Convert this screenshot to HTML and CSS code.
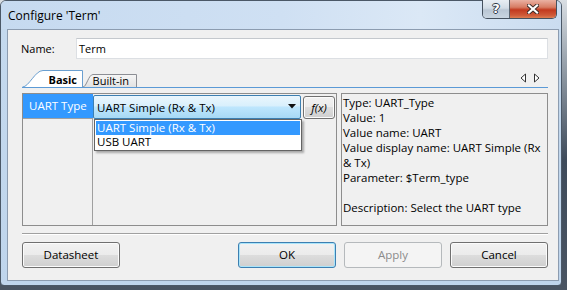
FILE: index.html
```html
<!DOCTYPE html>
<html>
<head>
<meta charset="utf-8">
<link rel="stylesheet" href="styles.css">
</head>
<body>
<div class="window">
  <div class="titlebar">
    <span class="title">Configure 'Term'</span>
    <div class="caption-btns">
      <div class="cap-help">?</div>
      <div class="cap-close">
        <svg width="12" height="10" viewBox="0 0 12 10">
          <path d="M2 1.5 L10 8.5 M10 1.5 L2 8.5" stroke="#3b2a28" stroke-width="4" stroke-linecap="square" fill="none"/>
          <path d="M2 1.5 L10 8.5 M10 1.5 L2 8.5" stroke="#ffffff" stroke-width="2.2" stroke-linecap="square" fill="none"/>
        </svg>
      </div>
    </div>
  </div>
  <div class="client">
    <div class="name-row">
      <span class="name-label">Name:</span>
      <div class="name-input">Term</div>
    </div>
    <div class="tabbar">
      <div class="tab tab-active">
        <svg class="tab-shape" width="61" height="17" viewBox="0 0 61 17">
          <path d="M0.5 17 C7 17 13 0.5 21 0.5 L60.5 0.5 L60.5 17" fill="#ffffff" stroke="#6a9fd0" stroke-width="1"/>
        </svg>
        <span class="tab-label tab-label-active">Basic</span>
      </div>
      <div class="tab tab-inactive">
        <svg class="tab-shape" width="54" height="13" viewBox="0 0 54 13">
          <defs>
            <linearGradient id="tg" x1="0" y1="0" x2="0" y2="1">
              <stop offset="0" stop-color="#f6f6f6"/>
              <stop offset="1" stop-color="#e3e3e3"/>
            </linearGradient>
          </defs>
          <path d="M0 13 C3.5 13 5.5 0.5 10 0.5 L53.5 0.5 L53.5 13" fill="url(#tg)" stroke="#8c8e94" stroke-width="1"/>
        </svg>
        <span class="tab-label tab-label-inactive">Built-in</span>
      </div>
      <div class="tab-arrows">
        <svg width="22" height="10" viewBox="0 0 22 10">
          <path d="M5.5 1 L1 5 L5.5 9 Z" fill="#ffffff" stroke="#333" stroke-width="1" stroke-linejoin="round"/>
          <path d="M14.5 1 L19 5 L14.5 9 Z" fill="#ffffff" stroke="#333" stroke-width="1" stroke-linejoin="round"/>
        </svg>
      </div>
    </div>
    <div class="page">
      <div class="grid">
        <div class="grid-row">
          <div class="cell-name">UART Type</div>
          <div class="cell-value">
            <div class="combo">
              <span class="combo-text">UART Simple (Rx &amp; Tx)</span>
              <svg class="combo-arrow" width="8" height="5" viewBox="0 0 8 5"><path d="M0 0 L8 0 L4 4.5 Z" fill="#111"/></svg>
            </div>
            <div class="fx">f(x)</div>
          </div>
        </div>
        <div class="grid-body">
          <div class="grid-col"></div>
        </div>
        <div class="dropdown">
          <div class="dd-item dd-selected">UART Simple (Rx &amp; Tx)</div>
          <div class="dd-item">USB UART</div>
        </div>
      </div>
      <div class="desc">Type: UART_Type<br>Value: 1<br>Value name: UART<br>Value display name: UART Simple (Rx<br>&amp; Tx)<br>Parameter: $Term_type<br><br>Description: Select the UART type</div>
    </div>
    <div class="sep"></div>
    <div class="buttons">
      <div class="btn">Datasheet</div>
      <div class="btn-group">
        <div class="btn btn-default">OK</div>
        <div class="btn btn-disabled">Apply</div>
        <div class="btn">Cancel</div>
      </div>
    </div>
  </div>
</div>
</body>
</html>
```

FILE: styles.css
```css
* { box-sizing: border-box; }
html, body {
  margin: 0;
  padding: 0;
  width: 567px;
  height: 290px;
  overflow: hidden;
}
body {
  background: linear-gradient(#d9dee3 0px, #9aa4ae 60px, #3e4b5b 160px, #4a5563 290px);
  font-family: "Open Sans", "Noto Sans", sans-serif;
  font-size: 11px;
  color: #000;
}
.window {
  width: 562px;
  height: 286px;
  border: 1px solid #4b5867;
  border-radius: 6px 6px 4px 4px;
  background: linear-gradient(#d7e5f4 0px, #c4d9ee 28px, #bfd5ec 286px);
  display: flex;
  flex-direction: column;
  padding: 0 2px 4px 6px;
}
.titlebar {
  height: 28px;
  margin: 0 -2px 0 -6px;
  padding: 0 4px 0 7px;
  display: flex;
  justify-content: space-between;
  align-items: flex-start;
  background: linear-gradient(90deg, #c6daf0 0%, #cfe0f3 50%, #dbe8f6 75%, #cadcf0 100%);
  border-radius: 5px 5px 0 0;
}
.title {
  font-size: 12px;
  line-height: 14px;
  margin-top: 8px;
  color: #000;
}
.caption-btns {
  display: flex;
  height: 19px;
  margin-top: -1px;
  border: 1px solid #45515f;
  border-top: none;
  border-radius: 0 0 5px 5px;
  overflow: hidden;
}
.cap-help {
  width: 27px;
  height: 18px;
  background: linear-gradient(#e8eef4 0%, #d2dce6 45%, #b9c6d4 55%, #c9d5e1 100%);
  border-right: 1px solid #5a6470;
  color: #fff;
  font-family: "DejaVu Sans", sans-serif;
  font-weight: bold;
  font-size: 13px;
  line-height: 18px;
  text-align: center;
  text-shadow: 1px 0 0 #2e3a48, -1px 0 0 #2e3a48, 0 1px 0 #2e3a48, 0 -1px 0 #2e3a48;
}
.cap-close {
  width: 46px;
  height: 18px;
  background: linear-gradient(#eab1a3 0%, #d77c64 40%, #c2391f 55%, #cf5a39 85%, #dd7d52 100%);
  display: flex;
  align-items: center;
  justify-content: center;
}
.client {
  height: 252px;
  border: 1px solid #8c9cb0;
  background: #f0f0f0;
  padding: 8px 10px 0 14px;
  display: flex;
  flex-direction: column;
}
.name-row {
  height: 21px;
  display: flex;
  align-items: center;
}
.name-label {
  width: 55px;
  margin-left: -1px;
  font-size: 11px;
}
.name-input {
  flex: 1;
  height: 21px;
  background: #fff;
  border: 1px solid #dcdfe3;
  border-top-color: #c4c8cd;
  padding-left: 2px;
  line-height: 19px;
}
.tabbar {
  margin-top: 11px;
  height: 17px;
  display: flex;
  align-items: flex-end;
}
.tab {
  position: relative;
  display: flex;
  justify-content: flex-end;
  align-items: center;
}
.tab-shape {
  position: absolute;
  left: 0;
  top: 0;
}
.tab-active {
  width: 61px;
  height: 17px;
  z-index: 1;
}
.tab-inactive {
  width: 54px;
  height: 13px;
}
.tab-label {
  position: relative;
  line-height: 14px;
}
.tab-label-active {
  font-weight: bold;
  margin-right: 6px;
  margin-top: 2px;
}
.tab-label-inactive {
  margin-right: 8px;
  margin-top: 1px;
}
.tab-arrows {
  margin-left: auto;
  align-self: flex-start;
  margin-top: 3px;
  margin-right: 6px;
  height: 10px;
}
.tab-arrows svg { display: block; }
.page {
  height: 139px;
  border-top: 1px solid #5b9ad6;
  padding-top: 5px;
  display: flex;
  gap: 4px;
}
.grid {
  position: relative;
  width: 315px;
  height: 133px;
  border: 1px solid #8d8d8d;
  display: flex;
  flex-direction: column;
}
.grid-row {
  height: 25px;
  display: flex;
}
.cell-name {
  width: 70px;
  height: 25px;
  background: #3399ff;
  color: #fff;
  border-bottom: 1px solid #a0a0a0;
  padding-left: 6px;
  line-height: 24px;
  font-size: 11.5px;
}
.cell-value {
  display: flex;
  padding-left: 0;
}
.combo {
  width: 208px;
  height: 24px;
  margin-top: 1px;
  border: 1px solid #3c7fb1;
  border-radius: 2px;
  background: linear-gradient(#eaf6fd 0%, #d9f0fc 45%, #bee6fd 50%, #a7d9f5 100%);
  display: flex;
  align-items: center;
  padding: 0 4px 0 3px;
}
.combo-text {
  flex: 1;
  font-size: 11.5px;
}
.combo-arrow {
  margin-bottom: 1px;
}
.fx {
  width: 32px;
  height: 23px;
  margin-top: 2px;
  margin-left: 2px;
  border: 1px solid #707070;
  border-radius: 3px;
  background: linear-gradient(#f2f2f2 0%, #ebebeb 49%, #dddddd 50%, #cfcfcf 100%);
  box-shadow: inset 0 0 0 1px #fbfbfb;
  font-style: italic;
  font-size: 11.5px;
  line-height: 21px;
  text-align: center;
}
.grid-body {
  flex: 1;
  display: flex;
}
.grid-col {
  width: 70px;
  border-right: 1px solid #a0a0a0;
}
.dropdown {
  position: absolute;
  left: 71px;
  top: 25px;
  width: 208px;
  height: 32px;
  background: #fff;
  border: 1px solid #646464;
  padding: 1px 1px;
  box-shadow: 2px 2px 2px rgba(0, 0, 0, 0.3);
  z-index: 2;
}
.dd-item {
  height: 14px;
  line-height: 14px;
  padding-left: 1px;
  font-size: 11.5px;
}
.dd-selected {
  background: #3399ff;
  color: #fff;
}
.desc {
  width: 207px;
  height: 133px;
  border: 1px solid #8d8d8d;
  padding: 1px 1px;
  line-height: 15px;
  font-size: 11.5px;
  white-space: nowrap;
  overflow: hidden;
}
.sep {
  margin-top: 7px;
  height: 2px;
  border-top: 1px solid #a0a0a0;
  border-bottom: 1px solid #ffffff;
}
.buttons {
  margin-top: 7px;
  height: 26px;
  display: flex;
  justify-content: space-between;
}
.btn-group {
  display: flex;
  gap: 8px;
}
.btn {
  width: 98px;
  height: 26px;
  border: 1px solid #707070;
  border-radius: 3px;
  background: linear-gradient(#f2f2f2 0%, #ebebeb 49%, #dddddd 50%, #cfcfcf 100%);
  box-shadow: inset 0 0 0 1px #fbfbfb;
  text-align: center;
  line-height: 24px;
  font-size: 11.5px;
}
.btn-default {
  border-color: #3c7fb1;
  box-shadow: inset 0 0 0 1px #a9e4fa;
}
.btn-disabled {
  border-color: #b5b9bc;
  background: #f4f4f4;
  box-shadow: none;
  color: #8b8b8b;
}
```
